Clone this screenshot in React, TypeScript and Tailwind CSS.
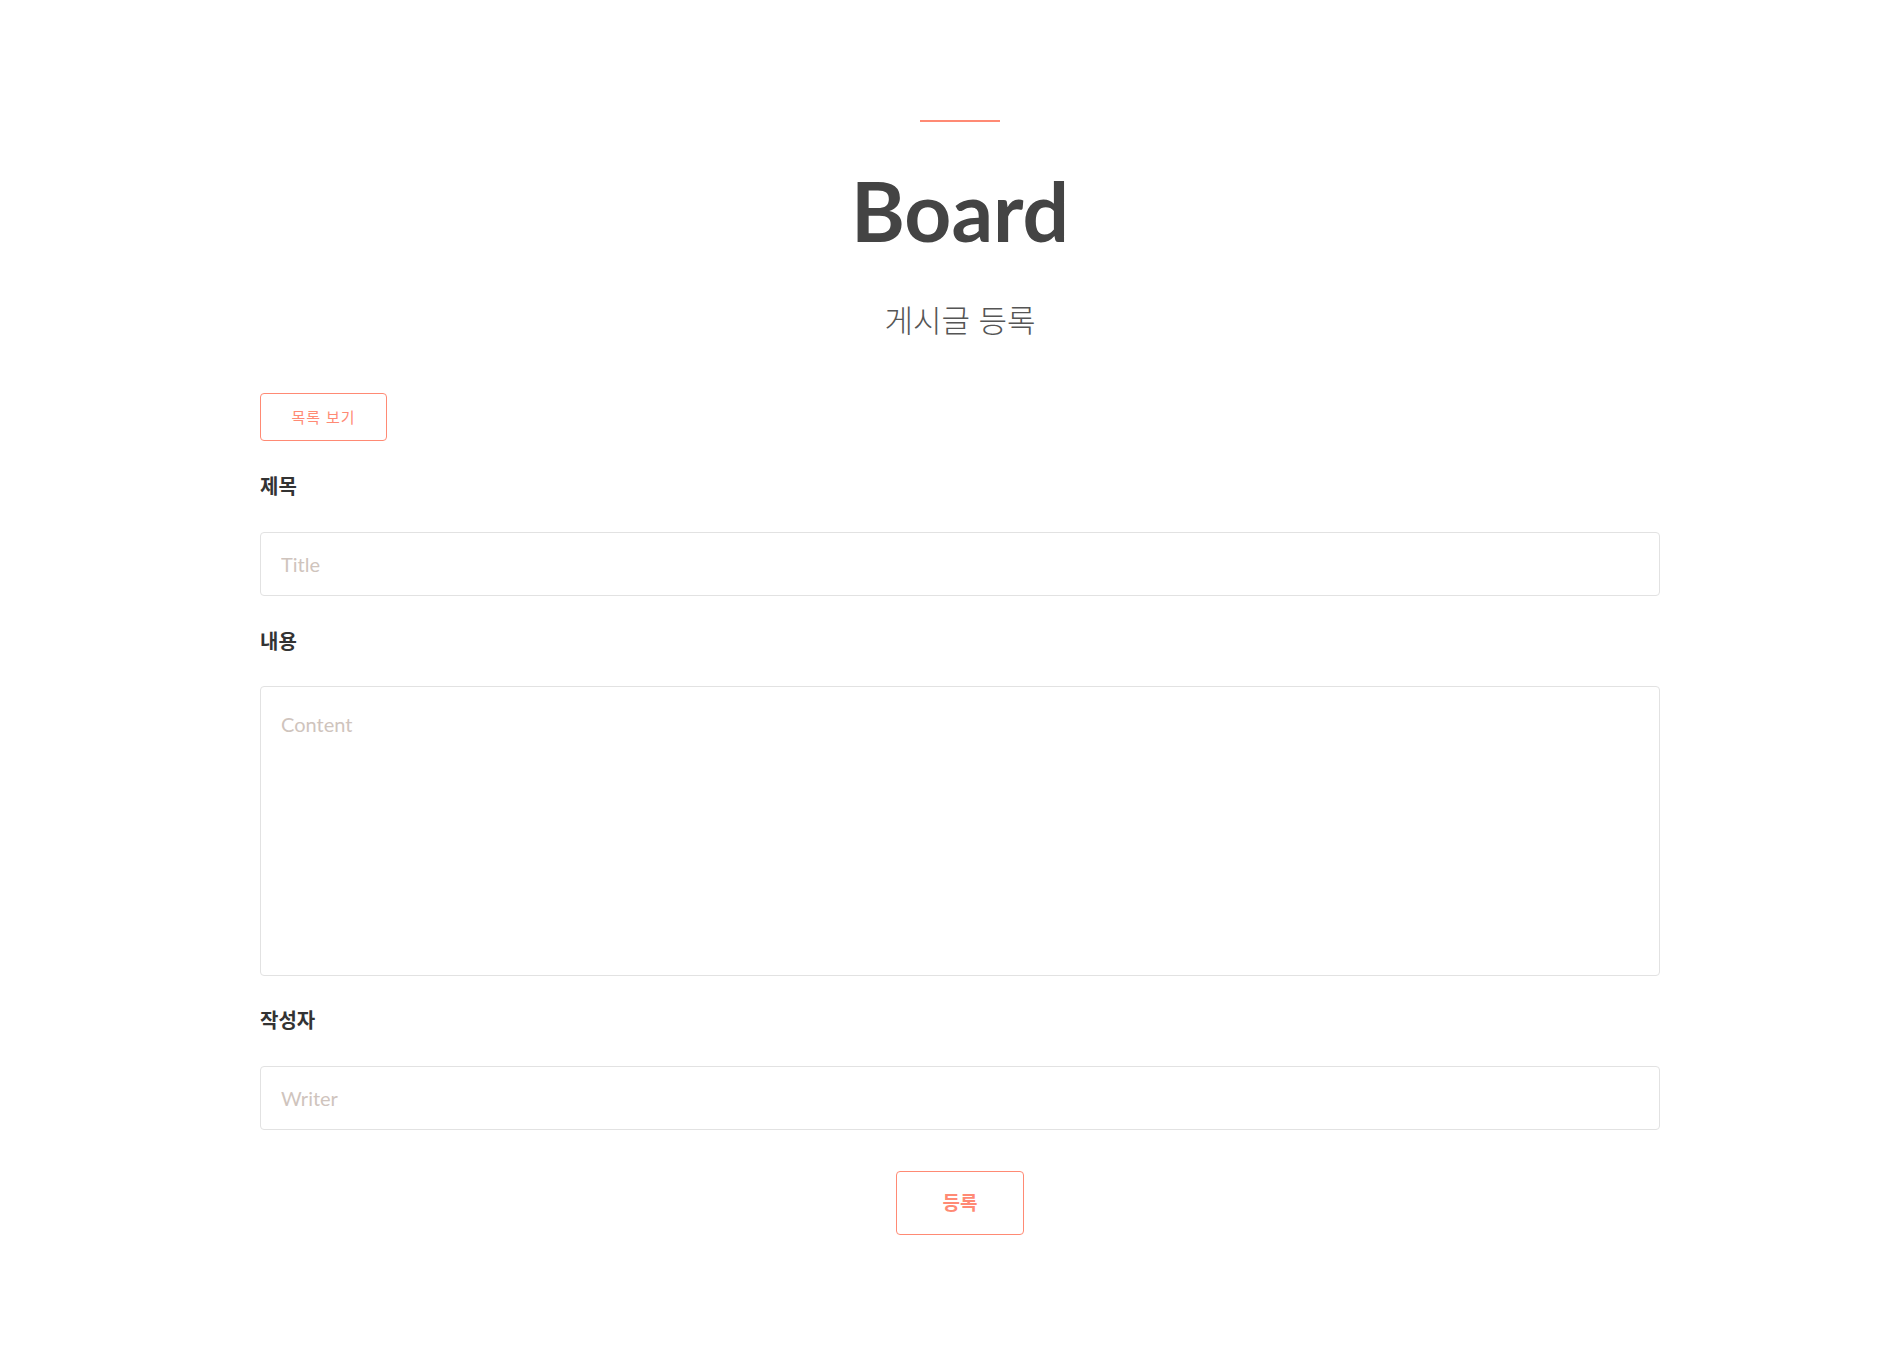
import { useState } from "react";

const BoardWrite = () => {
  const [title, setTitle] = useState("");
  const [content, setContent] = useState("");
  const [writer, setWriter] = useState("");

  const handleSubmit = (e: React.FormEvent) => {
    e.preventDefault();
  };

  return (
    <div className="min-h-screen bg-white flex justify-center pl-[17px] font-['Lato','Noto_Sans_CJK_KR',sans-serif]">
      <div className="w-[1400px] pt-[120px] pb-[120px]">
        {/* Heading */}
        <div className="flex flex-col items-center">
          <div className="w-[80px] h-[2px] bg-[#ff8a74]" />
          <h1 className="mt-[47px] text-[82px] leading-none font-bold text-[#444444]">Board</h1>
          <p className="mt-[49px] text-[31px] leading-[40px] font-light text-[#555555]">게시글 등록</p>
        </div>

        <form onSubmit={handleSubmit} className="mt-[53px]">
          <button
            type="button"
            className="w-[127px] h-[48px] flex items-center justify-center border border-[#ff8a74] rounded-[4px] text-[15px] text-[#ff8a74] tracking-[1px] hover:bg-[#fff4f2]"
          >
            목록 보기
          </button>

          {/* 제목 */}
          <label className="block mt-[32px] text-[20px] leading-[26px] font-bold text-[#333333]">제목</label>
          <input
            type="text"
            value={title}
            onChange={(e) => setTitle(e.target.value)}
            placeholder="Title"
            className="mt-[33px] w-full h-[64px] px-[20px] border border-[#e2e2e2] rounded-[4px] text-[20px] text-[#444] placeholder:text-[#cfc4bd] focus:outline-none"
          />

          {/* 내용 */}
          <label className="block mt-[32px] text-[20px] leading-[26px] font-bold text-[#333333]">내용</label>
          <textarea
            value={content}
            onChange={(e) => setContent(e.target.value)}
            placeholder="Content"
            className="mt-[32px] block w-full h-[290px] px-[20px] pt-[22px] pb-[18px] border border-[#e2e2e2] rounded-[4px] text-[20px] leading-[30px] text-[#444] placeholder:text-[#cfc4bd] resize-none focus:outline-none"
          />

          {/* 작성자 */}
          <label className="block mt-[31px] text-[20px] leading-[26px] font-bold text-[#333333]">작성자</label>
          <input
            type="text"
            value={writer}
            onChange={(e) => setWriter(e.target.value)}
            placeholder="Writer"
            className="mt-[33px] w-full h-[64px] px-[20px] border border-[#e2e2e2] rounded-[4px] text-[20px] text-[#444] placeholder:text-[#cfc4bd] focus:outline-none"
          />

          <div className="flex justify-center mt-[41px]">
            <button
              type="submit"
              className="w-[128px] h-[64px] flex items-center justify-center border border-[#ff8a74] rounded-[4px] text-[19px] font-bold text-[#ff8a74] hover:bg-[#fff4f2]"
            >
              등록
            </button>
          </div>
        </form>
      </div>
    </div>
  );
};

export default BoardWrite;
